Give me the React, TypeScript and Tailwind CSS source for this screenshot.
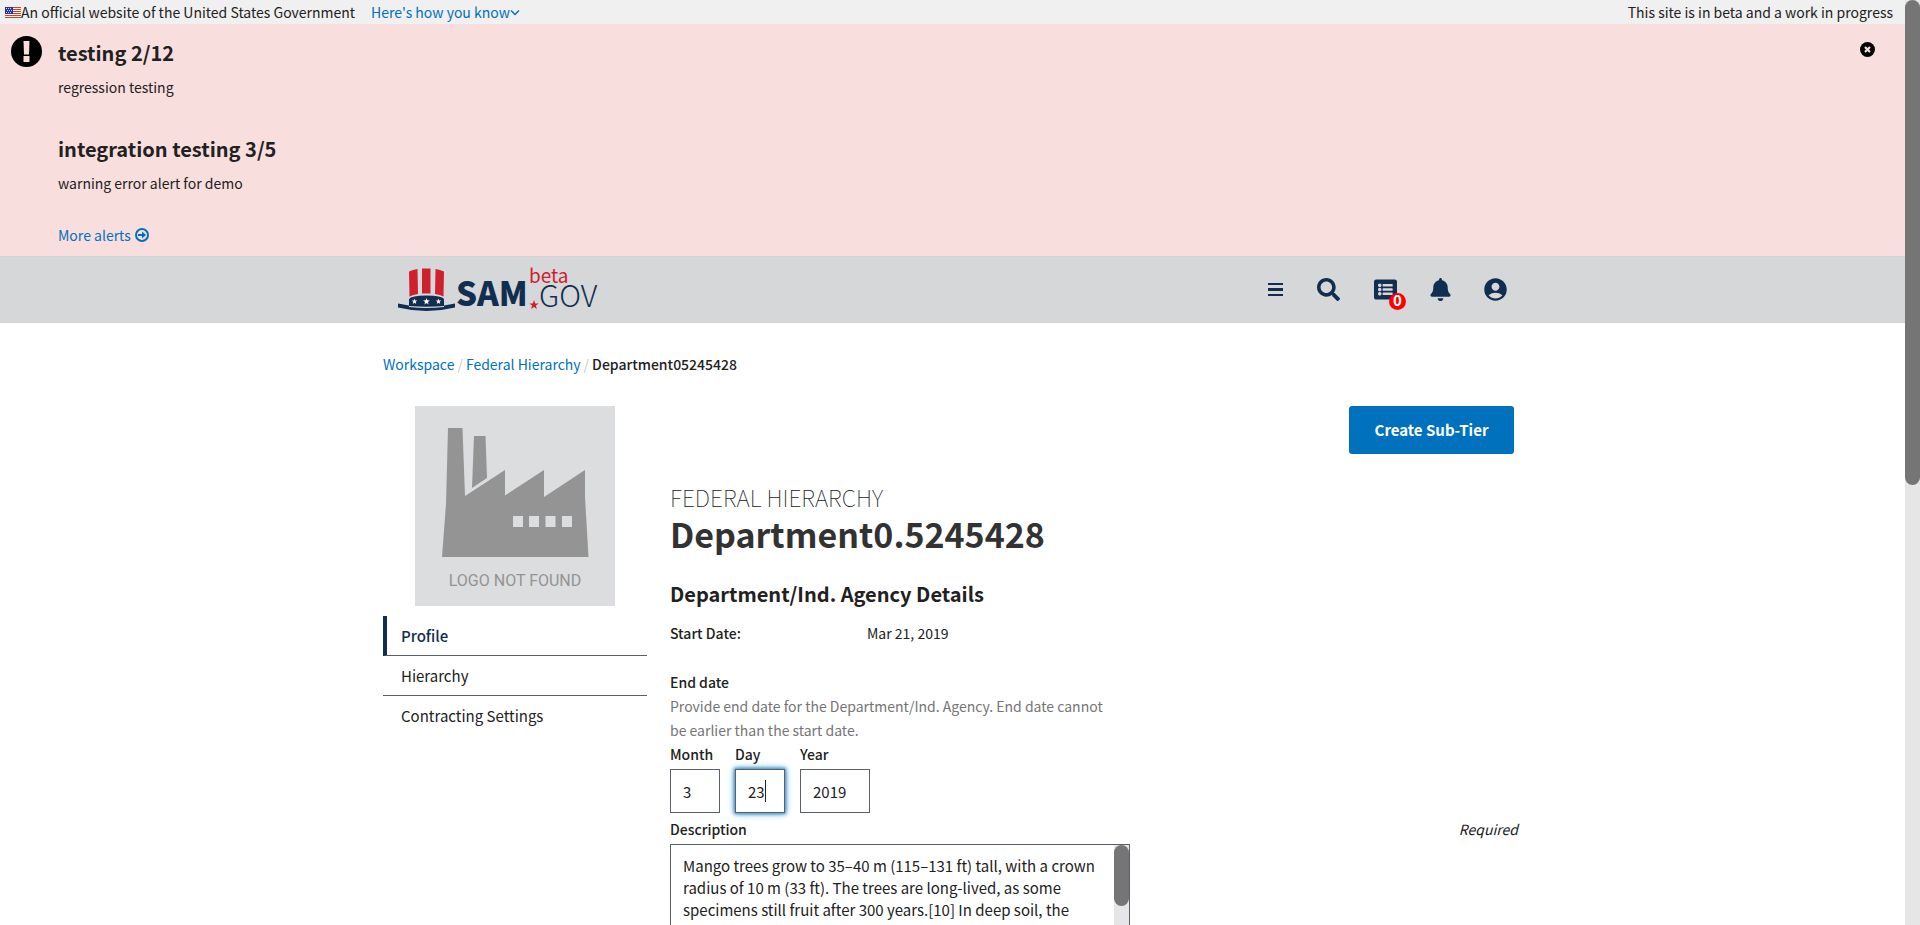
import React, { useEffect, useRef } from "react";
import { FaSearch, FaBell, FaListAlt } from "react-icons/fa";
import { MdAccountCircle } from "react-icons/md";

const heading = "text-xl leading-7 font-bold text-[#212121]";
const label = "mb-[3px] block text-sm leading-6 font-medium text-[#212121]";
const field = "block h-11 border border-[#5b616b] bg-white px-3 text-[15px] text-[#212121] outline-none";

function Flag() {
  return (
    <svg width="16" height="11" viewBox="0 0 16 11" aria-hidden="true">
      <rect width="16" height="11" fill="#fff" />
      {[0, 2, 4, 6, 8, 10].map((y) => (
        <rect key={y} y={y} width="16" height="1" fill="#db3e1f" />
      ))}
      <rect width="8" height="7" fill="#1e33b1" />
      {[1, 3, 5].map((x) => (
        <g key={x} fill="#dfe3ff">
          <rect x={x} y="1" width="1" height="1" />
          <rect x={x + 1} y="3" width="1" height="1" />
          <rect x={x} y="5" width="1" height="1" />
        </g>
      ))}
    </svg>
  );
}

const star = (cx: number, cy: number, r: number) =>
  Array.from({ length: 10 }, (_, i) => {
    const a = (Math.PI / 5) * i - Math.PI / 2;
    const q = i % 2 ? r * 0.4 : r;
    return `${cx + q * Math.cos(a)},${cy + q * Math.sin(a)}`;
  }).join(" ");

function SamLogo() {
  return (
    <svg className="overflow-visible" width="200" height="44" viewBox="0 0 200 44" role="img" aria-label="SAM.GOV beta">
      <g fill="#cf202f">
        <path d="M11 3.500Q15 1.500 19.500 1L20 26Q15 26.500 11.500 28.500Z" />
        <path d="M24 0.500H32.500V25.500H24Z" />
        <path d="M37.500 1Q42 1.500 46 3.500L45.500 28.500Q42 26.500 37 26Z" />
        <polygon points={star(136, 37, 5)} />
      </g>
      <g fill="#112e51">
        <path d="M11 31Q13 27.500 28.500 27.500Q44 27.500 46 31V38Q28.500 39.500 11 38Z" />
        <path d="M0 35.500L11 37.500V39Q28.500 41 46 39V37.500L57 35.500V39.500Q28.500 46.500 0 39.500Z" />
      </g>
      <g fill="#fff">
        <polygon points={star(16.5, 33.5, 3)} />
        <polygon points={star(28.5, 33.5, 3.6)} />
        <polygon points={star(40.5, 33.5, 3)} />
      </g>
      <text x="58" y="38" fill="#112e51" fontSize="33" fontWeight="900" fontFamily="'Noto Sans CJK SC', sans-serif">SAM</text>
      <text x="131" y="15" fill="#cf202f" fontSize="19" fontFamily="'Noto Sans CJK SC', sans-serif">beta</text>
      <text x="141" y="39" fill="#112e51" fontSize="30" fontWeight="300" fontFamily="'Noto Sans CJK SC', sans-serif">GOV</text>
    </svg>
  );
}

function MissingLogo() {
  return (
    <svg width="200" height="200" viewBox="0 0 200 200" role="img" aria-label="Logo not found">
      <rect width="200" height="200" fill="#dcddde" />
      <g fill="#949494">
        <polygon points="27,151 31,98 33,22 47.5,22 50,90 90,64 90,89.5 129,64 129,91 170,64 170,91 173.5,151" />
        <polygon points="59,30 70.5,30 72,72 57,82" />
        <text x="100" y="180" textAnchor="middle" fontSize="16" fontFamily="Roboto, sans-serif">LOGO NOT FOUND</text>
      </g>
      <g fill="#dcddde">
        {[98, 114, 130.5, 147].map((x) => (
          <rect key={x} x={x} y="110" width="10" height="11" />
        ))}
      </g>
    </svg>
  );
}

function Alert({ title, text }: { title: string; text: string }) {
  return (
    <div>
      <h3 className={heading}>{title}</h3>
      <p className="mt-2">{text}</p>
    </div>
  );
}

export default function App() {
  const day = useRef<HTMLInputElement>(null);
  useEffect(() => {
    day.current?.focus();
    day.current?.setSelectionRange(2, 2);
  }, []);

  return (
    <div className="flex h-screen overflow-hidden bg-white font-['Noto_Sans_CJK_SC',sans-serif] text-sm leading-6 text-[#212121]">
      <div className="min-w-0 flex-1 overflow-hidden">
        <div className="flex h-6 items-center justify-between bg-[#f0f0f0] pr-3 pl-[5px]">
          <div className="flex items-center">
            <Flag />
            <span>An official website of the United States Government</span>
            <button type="button" className="ml-4 flex items-center text-[#0071bc]">
              Here's how you know
              <svg width="10" height="7" viewBox="0 0 10 7" aria-hidden="true">
                <path d="M1 1.500l4 4 4-4" fill="none" stroke="currentColor" strokeWidth="1.500" />
              </svg>
            </button>
          </div>
          <span>This site is in beta and a work in progress</span>
        </div>

        <section className="flex h-[232px] items-start bg-[#f9dede] pt-3 pl-[11px]">
          <svg width="31" height="31" viewBox="0 0 31 31" aria-hidden="true">
            <circle cx="15.500" cy="15.500" r="15.500" />
            <path d="M12.500 5h6l-.5 13.500h-5zM12.500 20h6v6h-6z" fill="#f9dede" />
          </svg>
          <div className="ml-4 flex-1 pt-[3px]">
            <div className="space-y-9">
              <Alert title="testing 2/12" text="regression testing" />
              <Alert title="integration testing 3/5" text="warning error alert for demo" />
            </div>
            <a href="#alerts" className="mt-7 flex items-center gap-1 text-[#0071bc]">
              More alerts
              <svg width="14" height="14" viewBox="0 0 14 14" aria-hidden="true">
                <circle cx="7" cy="7" r="6" fill="none" stroke="currentColor" strokeWidth="2" />
                <path d="M3 6h4V3.500L11 7l-4 3.500V8H3z" fill="currentColor" />
              </svg>
            </a>
          </div>
          <button type="button" aria-label="Close alerts" className="mt-[6px] mr-[30px]">
            <svg width="15" height="15" viewBox="0 0 15 15">
              <circle cx="7.500" cy="7.500" r="7.500" />
              <path d="M5 5l5 5M10 5l-5 5" stroke="#f9dede" strokeWidth="2.200" />
            </svg>
          </button>
        </section>

        <header className="h-[67px] border-y border-[#d0d2d3] bg-[#d6d7d9]">
          <div className="mx-auto flex h-full w-[1139px] items-center justify-between pr-[13px] pl-[15px]">
            <a href="#home"><SamLogo /></a>
            <nav className="flex items-center text-[#112e51]">
              <button type="button" aria-label="Menu">
                <svg width="15" height="13" viewBox="0 0 15 13" fill="currentColor">
                  <path d="M0 0h15v2H0zM0 5h15v3H0zM0 11h15v2H0z" />
                </svg>
              </button>
              <button type="button" aria-label="Search" className="ml-[34px]"><FaSearch size={23} /></button>
              <button type="button" aria-label="Requests" className="relative ml-[34px]">
                <FaListAlt size={23} />
                <span className="absolute top-[15px] left-[15px] flex size-[17px] justify-center rounded-full bg-[#ff0000] text-[15px] leading-[13px] font-bold text-white">0</span>
              </button>
              <button type="button" aria-label="Notifications" className="ml-8"><FaBell size={23} /></button>
              <button type="button" aria-label="Account" className="ml-[30px]"><MdAccountCircle size={27} /></button>
            </nav>
          </div>
        </header>

        <div className="mx-auto w-[1139px]">
          <nav aria-label="Breadcrumb" className="flex gap-[3px] pt-[29px]">
            <a href="#workspace" className="text-[#0071bc]">Workspace</a>
            <span className="text-[#c8c9cb]">/</span>
            <a href="#hierarchy" className="text-[#0071bc]">Federal Hierarchy</a>
            <span className="text-[#c8c9cb]">/</span>
            <span className="font-medium">Department05245428</span>
          </nav>

          <div className="mt-[30px] flex items-start">
            <aside className="w-[264px] shrink-0">
              <div className="flex justify-center"><MissingLogo /></div>
              <nav className="mt-[10px] text-[15px]">
                <a href="#profile" className="flex h-10 items-center border-b border-l-4 border-b-[#5b616b] border-l-[#112e51] pl-[14px] font-medium text-[#112e51]">Profile</a>
                <a href="#tree" className="flex h-10 items-center border-b border-[#5b616b] pl-[18px]">Hierarchy</a>
                <a href="#contracting" className="flex h-10 items-center pl-[18px]">Contracting Settings</a>
              </nav>
            </aside>

            <main className="ml-[23px] flex-1">
              <div className="flex justify-end pr-2">
                <button type="button" className="h-12 w-[165px] rounded-[3px] bg-[#0071bc] text-[15px] font-bold text-white">Create Sub-Tier</button>
              </div>
              <p className="mt-[27px] text-[23px] leading-8 font-thin">FEDERAL HIERARCHY</p>
              <h1 className="text-[34px] leading-[42px] font-bold text-[#323232]">Department0.5245428</h1>
              <h2 className={`mt-[25px] ${heading}`}>Department/Ind. Agency Details</h2>
              <dl className="mt-[13px] flex">
                <dt className="w-[197px] font-medium">Start Date:</dt>
                <dd>Mar 21, 2019</dd>
              </dl>
              <fieldset className="mt-[25px]">
                <legend className="font-medium">End date</legend>
                <p className="w-[450px] text-[#757575]">Provide end date for the Department/Ind. Agency. End date cannot be earlier than the start date.</p>
                <div className="flex gap-[15px]">
                  <div>
                    <label htmlFor="month" className={label}>Month</label>
                    <input id="month" defaultValue="3" className={`${field} w-[50px]`} />
                  </div>
                  <div>
                    <label htmlFor="day" className={label}>Day</label>
                    <div className="relative">
                      <input id="day" ref={day} defaultValue="23" className={`${field} w-[50px] caret-transparent shadow-[0_0_3px_1px_#3e94cf,0_0_7px_#3e94cf]`} />
                      <span className="absolute top-[11px] left-[30px] h-[22px] w-px bg-[#212121]" />
                    </div>
                  </div>
                  <div>
                    <label htmlFor="year" className={label}>Year</label>
                    <input id="year" defaultValue="2019" className={`${field} w-[70px]`} />
                  </div>
                </div>
              </fieldset>
              <div className="mt-1 flex justify-between pr-1">
                <label htmlFor="description" className={label}>Description</label>
                <span className="italic">Required</span>
              </div>
              <div className="flex h-[160px] w-[460px] border border-[#5b616b]">
                <textarea
                  id="description"
                  className="min-w-0 flex-1 resize-none overflow-hidden py-[10px] pl-3 text-[15px] leading-[22px] outline-none"
                  defaultValue="Mango trees grow to 35–40 m (115–131 ft) tall, with a crown radius of 10 m (33 ft). The trees are long-lived, as some specimens still fruit after 300 years.[10] In deep soil, the"
                />
                <div className="w-[15px] bg-[#e6e6e6]"><div className="h-[61px] rounded-full bg-[#757575]" /></div>
              </div>
            </main>
          </div>
        </div>
      </div>
      <div className="w-[15px] bg-[#e6e6e6]">
        <div className="h-[485px] rounded-full bg-[#757575]" />
      </div>
    </div>
  );
}
